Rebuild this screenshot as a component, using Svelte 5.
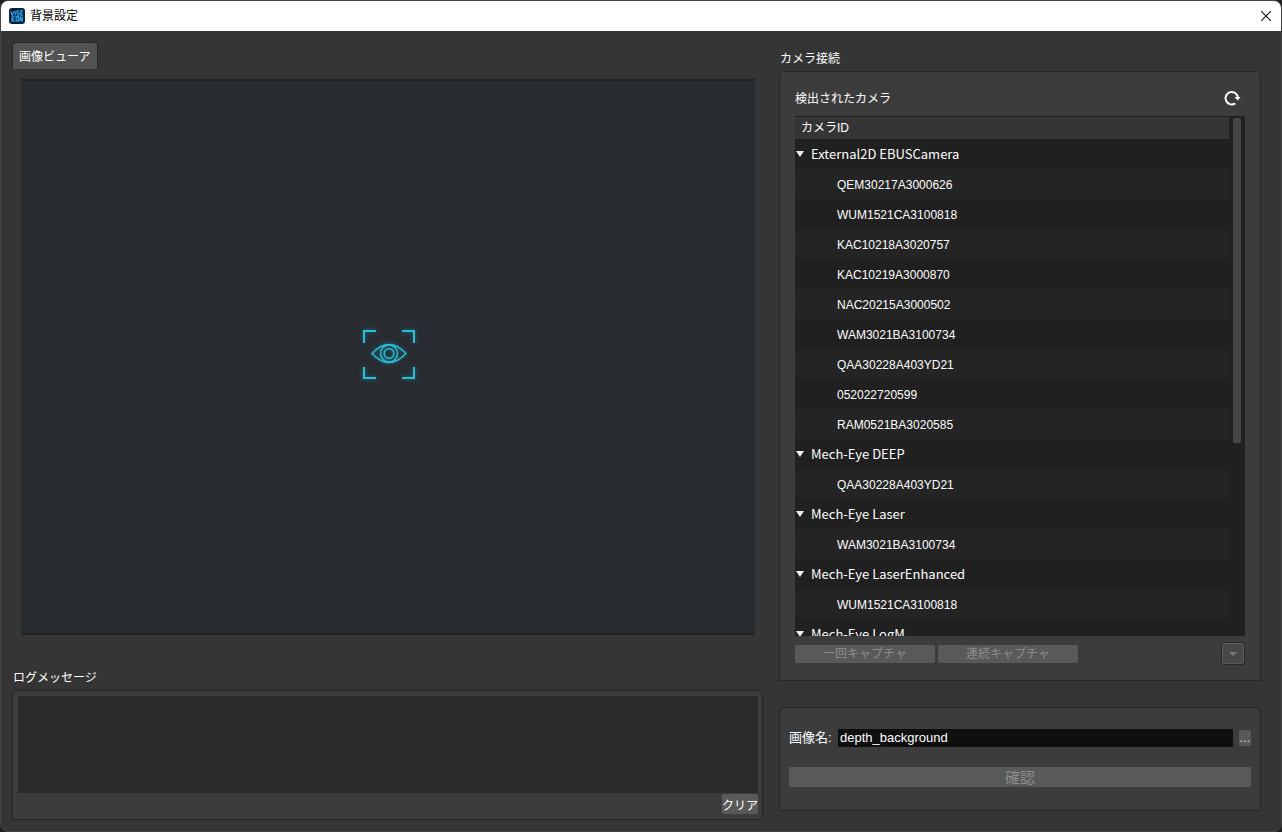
<script lang="ts">
  interface CameraGroup {
    name: string;
    cameras: string[];
  }

  const groups: CameraGroup[] = [
    {
      name: 'External2D EBUSCamera',
      cameras: [
        'QEM30217A3000626',
        'WUM1521CA3100818',
        'KAC10218A3020757',
        'KAC10219A3000870',
        'NAC20215A3000502',
        'WAM3021BA3100734',
        'QAA30228A403YD21',
        '052022720599',
        'RAM0521BA3020585',
      ],
    },
    { name: 'Mech-Eye DEEP', cameras: ['QAA30228A403YD21'] },
    { name: 'Mech-Eye Laser', cameras: ['WAM3021BA3100734'] },
    { name: 'Mech-Eye LaserEnhanced', cameras: ['WUM1521CA3100818'] },
    { name: 'Mech-Eye LogM', cameras: [] },
  ];

  let imageName = $state('depth_background');
  let log = $state('');
</script>

<div class="window">
  <header class="titlebar">
    <svg class="app-icon" viewBox="0 0 16 16" aria-hidden="true">
      <rect width="16" height="16" rx="3" fill="#06203c" />
      <g fill="none" stroke="#2f9be0" stroke-width="1.3">
        <path d="M1.6 3.4l1.8 4 1.4-4M6.2 3v4.4M10.4 3.2H8v1.9h2v2H7.6M14 2.6h-2.2v4.6H14M11.8 5h1.8" />
        <path d="M3 8.8v4.2h2.6M3 8.8h2.8M3 10.8h2.2M7.2 8.6v4.6h2.2V8.6zM11 13.6V8.6l2.2 4.8V8.2" />
      </g>
    </svg>
    <h1>背景設定</h1>
    <button class="close" aria-label="閉じる">
      <svg viewBox="0 0 10 10" aria-hidden="true">
        <path d="M0 0L10 10M10 0L0 10" stroke="#111" stroke-width="1.1" />
      </svg>
    </button>
  </header>

  <main>
    <section class="left">
      <button class="tab">画像ビューア</button>
      <div class="viewer">
        <svg viewBox="0 0 56 54" aria-hidden="true">
          <g fill="none" stroke="#2cbcd6">
            <path
              d="M3 15V3H15M41 3H53V15M53 39V50H41M15 50H3V39"
              stroke-width="2"
            />
            <path d="M11 25.500Q28 7.500 45 25.500Q28 43.500 11 25.500Z" stroke-width="1.5" />
            <circle cx="28" cy="25.500" r="8.500" stroke-width="1.5" />
            <circle cx="28" cy="25.500" r="4.800" stroke-width="1.5" />
          </g>
        </svg>
      </div>

      <label class="log-label" for="log">ログメッセージ</label>
      <div class="panel log-panel">
        <textarea id="log" readonly bind:value={log}></textarea>
        <button class="clear" onclick={() => (log = '')}>クリア</button>
      </div>
    </section>

    <section class="right">
      <h2>カメラ接続</h2>
      <div class="panel camera-panel">
        <div class="detected">
          <span>検出されたカメラ</span>
          <button class="refresh" aria-label="更新">
            <svg viewBox="0 0 18 18" aria-hidden="true">
              <path
                d="M12.200 14.300A6.200 6.200 0 1 1 14.900 9"
                fill="none"
                stroke="#fff"
                stroke-width="2"
              />
              <path d="M11.600 8H17.600L14.600 11.400Z" fill="#fff" />
            </svg>
          </button>
        </div>

        <div class="tree">
          <div class="tree-body">
            <table>
              <thead>
                <tr><th>カメラID</th></tr>
              </thead>
              <tbody>
                {#each groups as group}
                  <tr class="group">
                    <td>
                      <svg viewBox="0 0 8 6" aria-hidden="true">
                        <path d="M0 0H8L4 6Z" fill="#eee" />
                      </svg>
                      {group.name}
                    </td>
                  </tr>
                  {#each group.cameras as camera}
                    <tr class="camera"><td>{camera}</td></tr>
                  {/each}
                {/each}
              </tbody>
            </table>
          </div>
          <div class="scrollbar"><div class="thumb"></div></div>
        </div>

        <div class="capture">
          <button disabled>一回キャプチャ</button>
          <button disabled>連続キャプチャ</button>
          <button class="more" disabled aria-label="オプション">
            <svg viewBox="0 0 8 4" aria-hidden="true">
              <path d="M0 0H8L4 4Z" fill="#777" />
            </svg>
          </button>
        </div>
      </div>

      <div class="panel name-panel">
        <div class="name-row">
          <label for="image-name">画像名:</label>
          <input id="image-name" type="text" bind:value={imageName} />
          <button class="browse">...</button>
        </div>
        <button class="confirm" disabled>確認</button>
      </div>
    </section>
  </main>
</div>

<style>
  :global(body) {
    background: #1f1f1f;
  }

  .window,
  .window * {
    box-sizing: border-box;
  }

  .window {
    display: flex;
    flex-direction: column;
    height: 100vh;
    border: 1px solid #444;
    border-radius: 8px;
    overflow: hidden;
    background: #353535;
    color: #fff;
    font-family: 'Liberation Sans', 'Noto Sans CJK JP', sans-serif;
    font-size: 12px;
    line-height: 20px;
  }

  button {
    margin: 0;
    padding: 0;
    border: none;
    border-radius: 2px;
    background: #595959;
    color: #fff;
    font: inherit;
  }

  button:disabled {
    color: #8c8c8c;
  }

  svg {
    display: block;
  }

  h1,
  h2 {
    margin: 0;
    font-size: 12px;
    font-weight: normal;
  }

  .titlebar {
    display: flex;
    flex: none;
    align-items: center;
    height: 30px;
    padding: 0 10px 0 8px;
    background: #fff;
    color: #000;
  }

  .app-icon {
    width: 16px;
    height: 16px;
    margin-right: 5px;
  }

  .close {
    margin-left: auto;
    background: none;
  }

  .close svg {
    width: 10px;
    height: 10px;
  }

  main {
    display: flex;
    flex: 1;
    gap: 16px;
    min-height: 0;
    padding: 11px 20px 11px 11px;
  }

  .left,
  .right {
    display: flex;
    flex-direction: column;
    min-width: 0;
  }

  .left {
    flex: 1;
  }

  .right {
    width: 482px;
    padding: 7px 0 9px;
  }

  .panel {
    border: 1px solid #272727;
    border-radius: 5px 5px 0 0;
    background: #3c3c3c;
  }

  .tab {
    align-self: flex-start;
    height: 27px;
    padding: 2px 6px 0;
    border: 1px solid #272727;
    border-bottom: none;
    border-radius: 4px 4px 0 0;
    background: #535353;
  }

  .viewer {
    display: flex;
    flex: 1;
    align-items: center;
    justify-content: center;
    min-height: 0;
    margin: 10px 8px 0 9px;
    padding: 0 0 5px 2px;
    border: 1px solid #222;
    border-width: 2px 0;
    background: #282c31;
  }

  .viewer svg {
    width: 56px;
    height: 54px;
    filter: drop-shadow(0 0 2px #16798c);
  }

  .log-label {
    margin: 33px 0 2px 1px;
  }

  .log-panel {
    display: flex;
    flex-direction: column;
    height: 130px;
    padding: 5px 4px 5px 5px;
  }

  textarea {
    flex: 1;
    border: none;
    outline: none;
    resize: none;
    background: #2a2a2a;
    color: #fff;
    font: inherit;
  }

  .clear {
    align-self: flex-end;
    height: 20px;
    margin-top: 1px;
    padding-top: 2px;
  }

  h2 {
    margin: 0 0 2px 1px;
  }

  .camera-panel {
    display: flex;
    flex: 1;
    flex-direction: column;
    min-height: 0;
    padding: 16px 15px 15px;
  }

  .detected {
    display: flex;
    align-items: center;
    justify-content: space-between;
    height: 20px;
    margin-bottom: 8px;
  }

  .detected span {
    padding-top: 2px;
  }

  .refresh {
    margin-right: 4px;
    background: none;
  }

  .refresh svg {
    width: 18px;
    height: 18px;
  }

  .tree {
    display: flex;
    flex: 1;
    min-height: 0;
    background: #202020;
  }

  .tree-body {
    flex: 1;
    overflow: hidden;
  }

  table {
    width: 100%;
    border-collapse: collapse;
  }

  tr {
    height: 30px;
  }

  thead tr {
    height: 22px;
  }

  tbody tr:nth-child(even) {
    background: #242424;
  }

  th {
    padding: 0 6px;
    border-top: 1px solid #202020;
    background: #353535;
    font-size: 12px;
    font-weight: normal;
    text-align: left;
  }

  td {
    padding: 0;
    font-size: 13px;
  }

  .group td {
    display: flex;
    gap: 7px;
    align-items: center;
    height: 30px;
    padding-left: 1px;
    font-family: 'Noto Sans CJK SC', sans-serif;
  }

  .group svg {
    width: 8px;
    height: 6px;
  }

  .camera td {
    padding: 2px 0 0 42px;
    font-size: 12px;
  }

  .scrollbar {
    width: 16px;
    padding: 2px 4px;
  }

  .thumb {
    height: 63%;
    border-radius: 2px;
    background: #464646;
  }

  .capture {
    display: flex;
    gap: 3px;
    align-items: center;
    margin-top: 6px;
  }

  .capture button {
    width: 140px;
    height: 18px;
    line-height: 18px;
  }

  .capture .more {
    display: flex;
    align-items: center;
    justify-content: center;
    width: 24px;
    height: 23px;
    margin-left: auto;
    border: 1px solid #282828;
    border-radius: 3px;
    box-shadow: inset 0 0 0 1px #5c5c5c;
    background: #484848;
  }

  .more svg {
    width: 8px;
    height: 4px;
  }

  .name-panel {
    margin-top: 26px;
    padding: 20px 9px 23px;
  }

  .name-row {
    display: flex;
    align-items: center;
    margin-bottom: 19px;
    font-size: 13px;
  }

  .name-row label {
    width: 49px;
  }

  input {
    flex: 1;
    min-width: 0;
    height: 18px;
    padding: 0 2px;
    border: none;
    outline: none;
    background: #0f0f0f;
    color: #fff;
    font: inherit;
  }

  .browse {
    width: 12px;
    height: 16px;
    margin-left: 6px;
    color: #b8dcff;
    line-height: 16px;
  }

  .confirm {
    display: block;
    width: 100%;
    height: 20px;
    padding-top: 2px;
    font-size: 15px;
    line-height: 18px;
  }
</style>
